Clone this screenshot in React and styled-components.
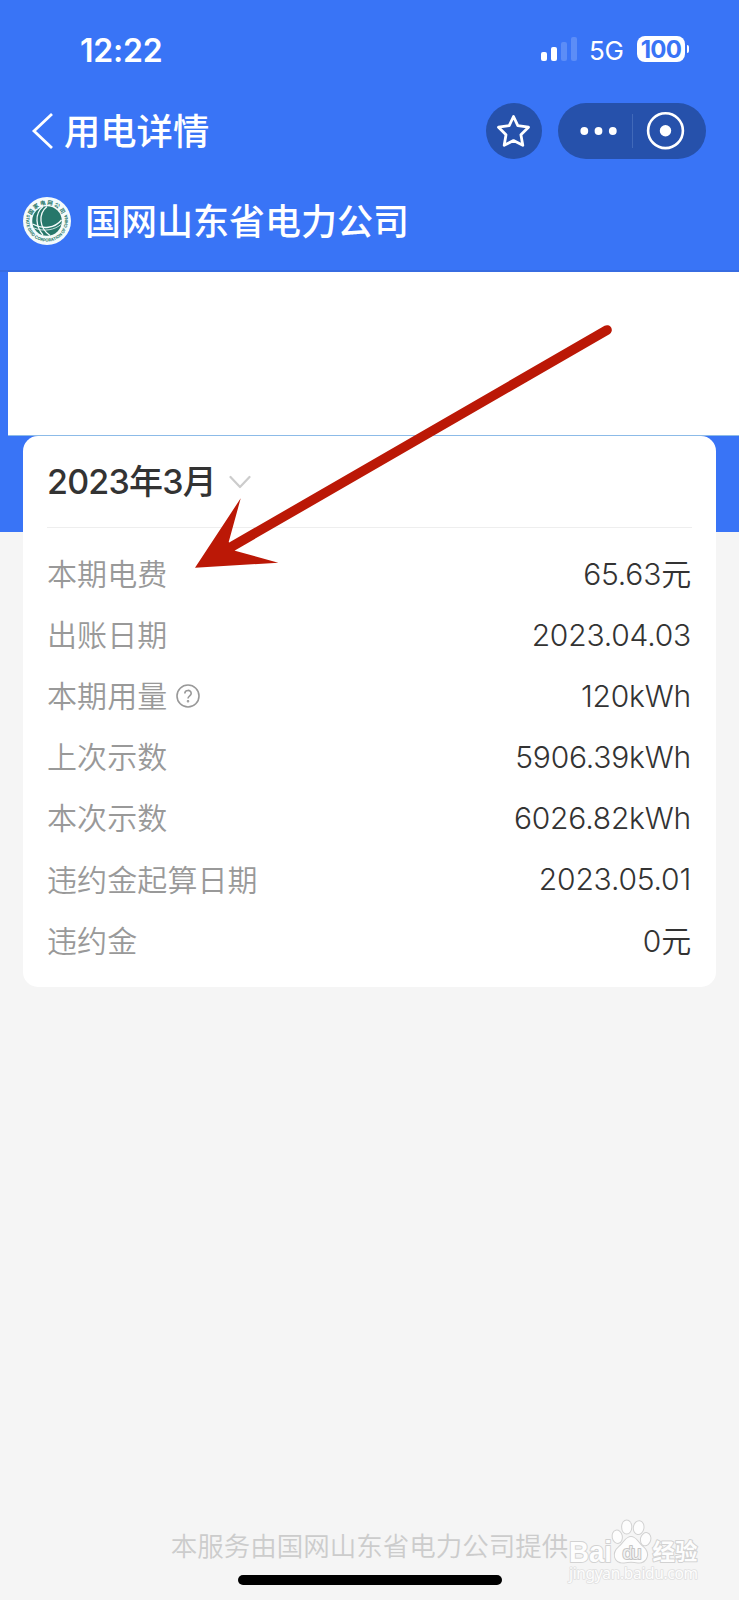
import React from 'react'
import styled, { createGlobalStyle } from 'styled-components'

const BLUE = '#3974f6'
const DARK_BLUE = '#2651ab'

const GlobalStyle = createGlobalStyle`
  * {
    box-sizing: border-box;
  }

  body {
    margin: 0;
    font-family: Inter, "Noto Sans CJK SC", sans-serif;
  }
`

const Screen = styled.div`
  position: relative;
  width: 739px;
  height: 1600px;
  display: flex;
  flex-direction: column;
  overflow: hidden;
  background: linear-gradient(${BLUE} 532px, #f5f5f5 532px);
`

const StatusBar = styled.div`
  height: 98px;
  display: flex;
  align-items: center;
  padding: 0 50px 0 80px;
  color: #fff;
`

const Time = styled.div`
  flex: 1;
  padding-top: 3px;
  font-size: 32px;
  font-weight: 600;
  line-height: 40px;
  letter-spacing: -0.2px;
`

const Signal = styled.div`
  display: flex;
  align-items: flex-end;
  gap: 4px;
  height: 24px;
`

const Bar = styled.div`
  width: 6px;
  height: ${props => props.height}px;
  border-radius: 2px;
  background: #fff;
  opacity: ${props => props.$active ? 1 : 0.18};
`

const Network = styled.div`
  width: 47px;
  padding: 3px 0 0 12px;
  font-size: 26px;
  line-height: 32px;
  letter-spacing: -0.2px;
`

const Battery = styled.div`
  display: flex;
  align-items: center;
  gap: 2px;
  margin-left: 13px;
`

const BatteryBody = styled.div`
  width: 48px;
  height: 26px;
  display: flex;
  align-items: center;
  justify-content: center;
  padding-top: 1px;
  border-radius: 8px;
  background: #fff;
  color: ${BLUE};
  font-size: 24px;
  font-weight: 700;
  line-height: 26px;
  letter-spacing: -0.7px;
`

const BatteryCap = styled.div`
  width: 2px;
  height: 8px;
  border-radius: 0 2px 2px 0;
  background: #fff;
`

const NavBar = styled.div`
  height: 66px;
  display: flex;
  align-items: center;
  padding: 0 33px 0 30px;
  color: #fff;
`

const Title = styled.div`
  flex: 1;
  margin-left: 10px;
  padding-top: 1px;
  font-size: 36.3px;
  font-weight: 500;
  line-height: 54px;
`

const RoundButton = styled.div`
  width: 56px;
  height: 56px;
  display: flex;
  align-items: center;
  justify-content: center;
  border-radius: 28px;
  background: ${DARK_BLUE};
`

const Capsule = styled.div`
  width: 148px;
  height: 56px;
  display: flex;
  align-items: center;
  margin-left: 16px;
  border-radius: 28px;
  background: ${DARK_BLUE};
`

const Company = styled.div`
  height: 108px;
  display: flex;
  align-items: center;
  padding: 8px 0 0 23px;
  border-bottom: 2px solid #376ce2;
  color: #fff;
`

const CompanyName = styled.div`
  margin-left: 14px;
  padding-top: 1px;
  font-size: 36px;
  font-weight: 500;
  line-height: 54px;
`

const Blank = styled.div`
  height: 164px;
  margin-left: 8px;
  background: #fff;
  border-bottom: 1px solid #8cbbe8;
`

const Card = styled.div`
  height: 551px;
  margin: 0 23px;
  padding: 0 24px;
  border-radius: 15px;
  background: #fff;
`

const Month = styled.div`
  height: 92px;
  display: flex;
  align-items: center;
  gap: 13px;
  border-bottom: 1px solid #eee;
  color: #333;
  font-size: 34px;
  font-weight: 500;
  letter-spacing: -0.8px;
`

const MonthText = styled.span`
  padding-bottom: 4px;
`

const Rows = styled.div`
  padding-top: 15px;
`

const Row = styled.div`
  height: 61.1px;
  display: flex;
  align-items: center;
  justify-content: space-between;
  font-size: 30px;
`

const Label = styled.div`
  display: flex;
  align-items: center;
  gap: 8px;
  color: #999;
  font-weight: 350;
  letter-spacing: 0.1px;
`

const LabelText = styled.span`
  padding-bottom: 3px;
`

const Value = styled.div`
  color: #333;
  font-weight: 350;
  letter-spacing: -0.2px;
  margin-right: 1px;
  padding-bottom: ${props => props.$yuan ? 3 : 0}px;
`

const Footer = styled.div`
  margin-top: auto;
  height: 74px;
  display: flex;
  flex-direction: column;
  justify-content: space-between;
  align-items: center;
  padding-bottom: 15px;
  color: #ccc;
  font-size: 26.5px;
  font-weight: 350;
  line-height: 40px;
`

const HomeIndicator = styled.div`
  width: 264px;
  height: 10px;
  border-radius: 5px;
  background: #000;
`

const Overlay = styled.svg`
  position: absolute;
  top: 0;
  left: 0;
  pointer-events: none;
`

const levels = [[9, true], [14, true], [19, false], [24, false]]

const rows = [
  { label: '本期电费', value: '65.63元' },
  { label: '出账日期', value: '2023.04.03' },
  { label: '本期用量', value: '120kWh', help: true },
  { label: '上次示数', value: '5906.39kWh' },
  { label: '本次示数', value: '6026.82kWh' },
  { label: '违约金起算日期', value: '2023.05.01' },
  { label: '违约金', value: '0元' },
]

const BackIcon = () => (
  <svg width="24" height="38" viewBox="0 0 24 38" fill="none" stroke="#fff" strokeWidth="2.8">
    <path d="M22 2 L4 19 L22 36" />
  </svg>
)

const StarIcon = () => (
  <svg width="36" height="36" viewBox="0 0 36 36" fill="none" stroke="#fff" strokeWidth="2.8" strokeLinejoin="round">
    <path d="M17.5 3.5 L21.8 12.7 L32.5 14.2 L24.9 21.7 L26.8 32.3 L17.5 27.6 L8.2 32.3 L10 21.7 L2.5 14.2 L13.2 12.7 Z" />
  </svg>
)

const CapsuleIcons = () => (
  <svg width="148" height="56" viewBox="0 0 148 56" fill="#fff">
    <circle cx="26.3" cy="28" r="3.9" />
    <circle cx="40.5" cy="28" r="3.9" />
    <circle cx="54.8" cy="28" r="3.9" />
    <path d="M74.5 11 V45" stroke="#4169b9" />
    <circle cx="107.5" cy="27.7" r="17.4" fill="none" stroke="#fff" strokeWidth="2.6" />
    <circle cx="107.5" cy="27.7" r="5.7" />
  </svg>
)

const Logo = () => (
  <svg width="48" height="48" viewBox="0 0 48 48">
    <defs>
      <path id="logo-top" d="M7.5 24 A16.5 16.5 0 0 1 40.5 24" />
      <path id="logo-bottom" d="M5.5 14 A20.9 20.9 0 1 0 42.5 14" />
    </defs>
    <circle cx="24" cy="24" r="24" fill="#f4fbfb" />
    <circle cx="24" cy="24" r="14.8" fill="#27776a" />
    <g fill="none" stroke="#f4fbfb" strokeWidth="1.3">
      <path d="M24 9.5 C15 17 16 31 27 38.5" />
      <path d="M20 9.5 C11 17 13 30 20 38" />
      <path d="M9.5 27 C20 33 32 31 38.5 23" />
      <path d="M11 31 C21 35 32 33 38.5 27" strokeWidth="0.8" />
    </g>
    <g fill="#27776a" fontWeight="700">
      <text fontSize="5.5" letterSpacing="1.2">
        <textPath href="#logo-top" startOffset="50%" textAnchor="middle">国家电网公司</textPath>
      </text>
      <text fontSize="4.2">
        <textPath href="#logo-bottom" startOffset="50%" textAnchor="middle" textLength="78">STATE GRID CORPORATION OF CHINA</textPath>
      </text>
    </g>
  </svg>
)

const DownIcon = () => (
  <svg width="22" height="18" viewBox="0 0 22 18" fill="none" stroke="#ccc" strokeWidth="2.2" strokeLinecap="round" strokeLinejoin="round">
    <path d="M1.5 4 L11 14 L20.5 4" />
  </svg>
)

const HelpIcon = () => (
  <svg width="26" height="26" viewBox="0 0 26 26" fill="none" stroke="#999" strokeWidth="1.6">
    <circle cx="13" cy="13" r="11" />
    <path d="M9.8 10.6 C9.8 6.4 16.2 6.4 16.2 10.4 C16.2 12.8 13 12.8 13 15.6" />
    <circle cx="13" cy="18.3" r="0.5" />
  </svg>
)

const Arrow = () => (
  <g fill="#bb1806">
    <path d="M232 546.5 L607 330" stroke="#bb1806" strokeWidth="9.6" strokeLinecap="round" />
    <path d="M195 567.7 L240.7 498.3 L228.7 542 L235 550.7 L278.3 562.7 Z" />
  </g>
)

const Watermark = () => (
  <g fill="#fdfdfd" stroke="#d2d2d2" strokeWidth="2" paintOrder="stroke" strokeLinejoin="round">
    <text x="569" y="1561.5" fontSize="30" fontWeight="700" fontFamily="Liberation Sans, sans-serif" textLength="43" lengthAdjust="spacingAndGlyphs">Bai</text>
    <ellipse cx="617.3" cy="1536.8" rx="4.6" ry="6.2" transform="rotate(-12 617 1537)" />
    <ellipse cx="626.7" cy="1527" rx="4.6" ry="6.6" />
    <ellipse cx="638.6" cy="1527.7" rx="4.8" ry="6.4" transform="rotate(10 639 1528)" />
    <ellipse cx="645.7" cy="1539.3" rx="4.7" ry="6.2" transform="rotate(14 646 1539)" />
    <path d="M631 1537 C636 1537 638 1543 643 1547 C651 1554 646 1563 638 1562.5 C633 1561.5 629 1561.5 624 1562.5 C614 1563 612 1553 619 1547 C624 1543 626 1537 631 1537 Z" />
    <text x="622.5" y="1559" fontSize="19" fontFamily="Liberation Sans, sans-serif" textLength="19" fill="#f2f2f2" stroke="#c4c4c4">du</text>
    <text x="652.5" y="1560" fontSize="22.5" fontWeight="700" fontFamily="Noto Sans CJK SC, sans-serif">经验</text>
    <text x="569" y="1579" fontSize="15.5" strokeWidth="1.6" stroke="#e0e0e0" fontFamily="Noto Sans, sans-serif" textLength="129">jingyan.baidu.com</text>
  </g>
)

export default () => (
  <Screen>
    <GlobalStyle />
    <StatusBar>
      <Time>12:22</Time>
      <Signal>
        {levels.map(([height, active]) => <Bar key={height} height={height} $active={active} />)}
      </Signal>
      <Network>5G</Network>
      <Battery>
        <BatteryBody>100</BatteryBody>
        <BatteryCap />
      </Battery>
    </StatusBar>
    <NavBar>
      <BackIcon />
      <Title>用电详情</Title>
      <RoundButton><StarIcon /></RoundButton>
      <Capsule><CapsuleIcons /></Capsule>
    </NavBar>
    <Company>
      <Logo />
      <CompanyName>国网山东省电力公司</CompanyName>
    </Company>
    <Blank />
    <Card>
      <Month>
        <MonthText>2023年3月</MonthText>
        <DownIcon />
      </Month>
      <Rows>
        {rows.map(({ label, value, help }) => (
          <Row key={label}>
            <Label>
              <LabelText>{label}</LabelText>
              {help && <HelpIcon />}
            </Label>
            <Value $yuan={value.endsWith('元')}>{value}</Value>
          </Row>
        ))}
      </Rows>
    </Card>
    <Footer>
      本服务由国网山东省电力公司提供
      <HomeIndicator />
    </Footer>
    <Overlay width="739" height="1600" viewBox="0 0 739 1600">
      <Arrow />
      <Watermark />
    </Overlay>
  </Screen>
)
